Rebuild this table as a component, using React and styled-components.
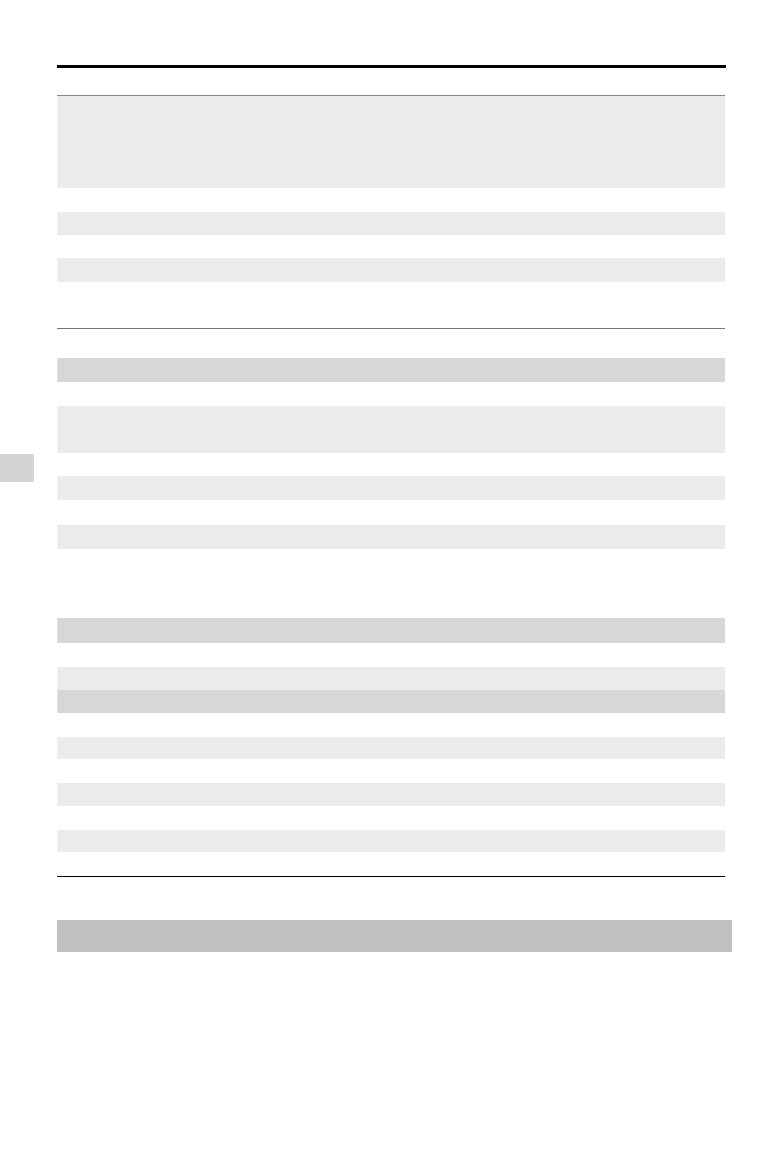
import React from "react";
import styled, { createGlobalStyle } from "styled-components";

const GlobalStyle = createGlobalStyle`
  html, body {
    margin: 0;
    padding: 0;
    background: #ffffff;
    font-family: "Liberation Sans", Arial, sans-serif;
  }
`;

const tones = {
  light: "#eaeceb",
  dark: "#d7d7d7",
};

const Page = styled.div`
  position: relative;
  width: 782px;
  height: 1162px;
  background: #ffffff;
  padding: 65px 0 0 57px;
  box-sizing: border-box;
`;

const Column = styled.div`
  display: flex;
  flex-direction: column;
  width: 669px;
`;

const TopRule = styled.div`
  height: 3px;
  background: #000000;
`;

const Rule = styled.div`
  height: 1px;
  width: 668px;
  margin-top: ${(p) => p.$gap}px;
  background: ${(p) => p.$color};
`;

const Row = styled.div`
  width: 668px;
  height: ${(p) => p.$h}px;
  margin-top: ${(p) => p.$gap || 0}px;
  background: ${(p) => tones[p.$tone]};
  box-sizing: border-box;
  border-left: 1px solid ${(p) => (p.$tone === "dark" ? "#e2e2e2" : "#f0f1f0")};
`;

const Banner = styled.div`
  width: 675px;
  height: 32px;
  margin-top: 43px;
  background: #bfc1c0;
`;

const SideTab = styled.div`
  position: absolute;
  left: 0;
  top: 454px;
  width: 34px;
  height: 28px;
  background: #d4d4d4;
`;

const rowsA = [
  { h: 92, gap: 0, tone: "light" },
  { h: 23, gap: 24, tone: "light" },
  { h: 24, gap: 23, tone: "light" },
];

const rowsB = [
  { h: 24, gap: 29, tone: "dark" },
  { h: 47, gap: 24, tone: "light" },
  { h: 24, gap: 23, tone: "light" },
  { h: 24, gap: 25, tone: "light" },
  { h: 25, gap: 69, tone: "dark" },
  { h: 23, gap: 24, tone: "light" },
  { h: 23, gap: 0, tone: "dark" },
  { h: 22, gap: 24, tone: "light" },
  { h: 23, gap: 24, tone: "light" },
  { h: 22, gap: 24, tone: "light" },
];

export default function App() {
  return (
    <Page>
      <GlobalStyle />
      <SideTab />
      <Column>
        <TopRule />
        <Rule $gap={27} $color="#888888" />
        {rowsA.map((r, i) => (
          <Row key={`a${i}`} $h={r.h} $gap={r.gap} $tone={r.tone} />
        ))}
        <Rule $gap={46} $color="#777777" />
        {rowsB.map((r, i) => (
          <Row key={`b${i}`} $h={r.h} $gap={r.gap} $tone={r.tone} />
        ))}
        <Rule $gap={24} $color="#000000" />
        <Banner />
      </Column>
    </Page>
  );
}
